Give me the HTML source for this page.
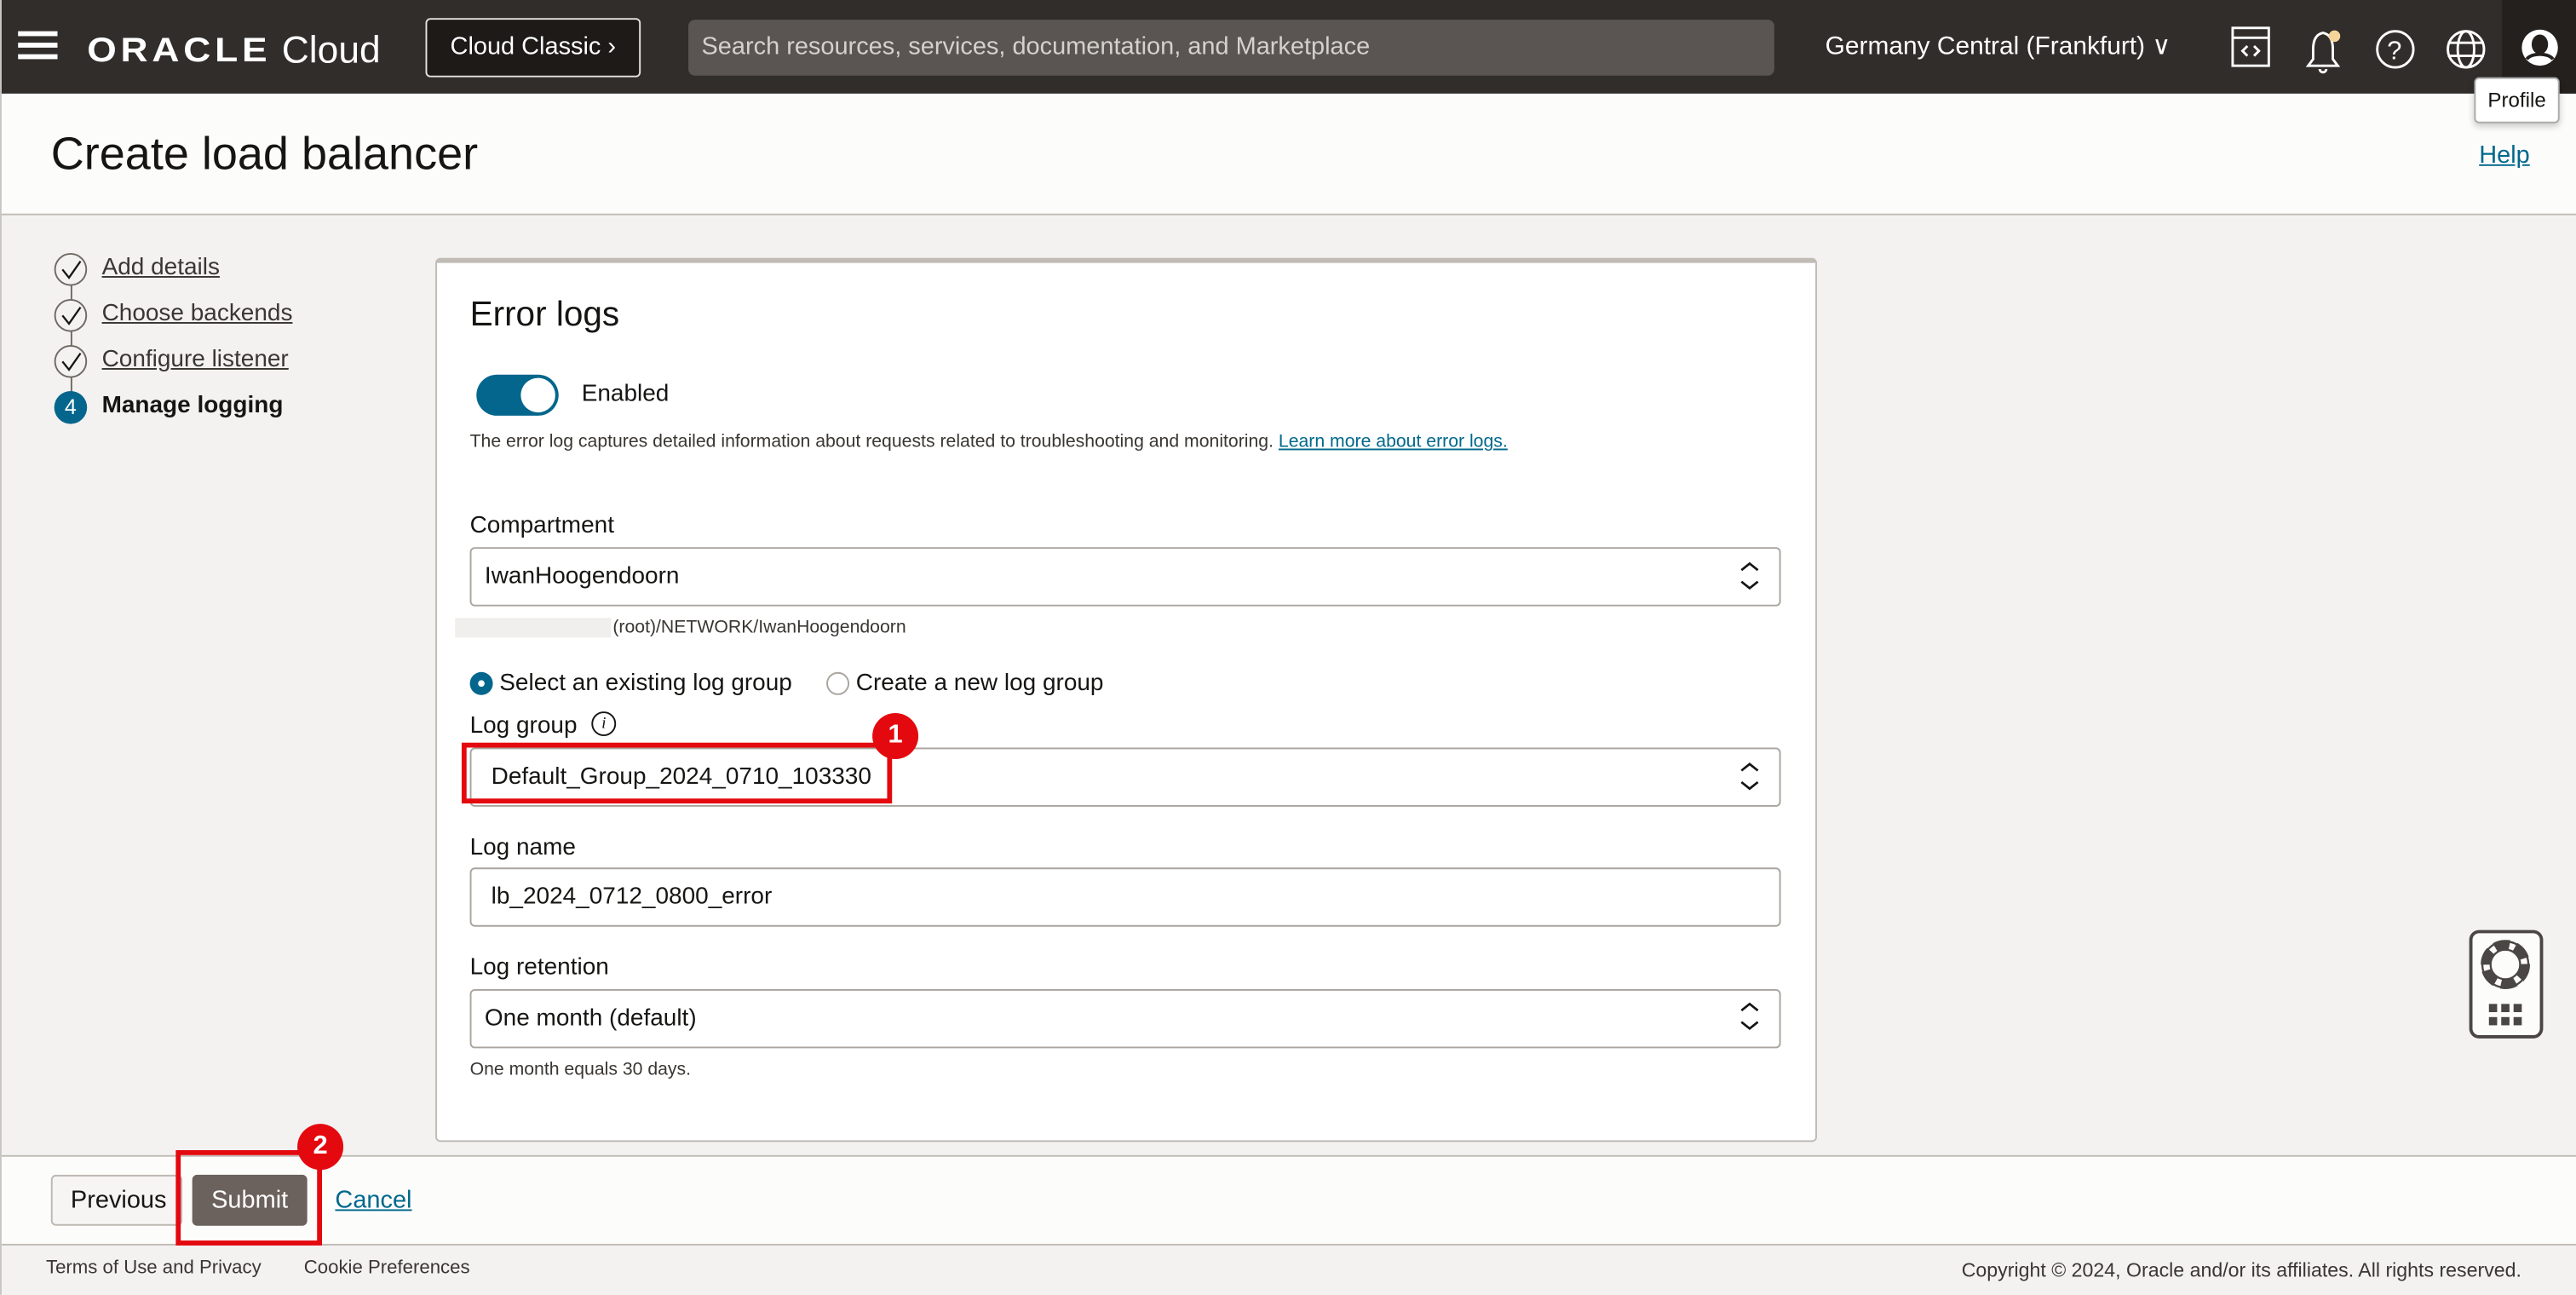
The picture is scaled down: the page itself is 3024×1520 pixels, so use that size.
<!DOCTYPE html>
<html><head><meta charset="utf-8"><style>
*{box-sizing:border-box;margin:0;padding:0}
html,body{width:3024px;height:1520px;overflow:hidden;background:#f3f2f1}
#w{width:1568px;height:788px;transform:scale(1.92857);transform-origin:0 0;position:relative;font-family:"Liberation Sans",sans-serif;color:#161513;background:#f3f2f1;border-left:1px solid #c9c5c0}
.a{position:absolute}
.hdr{left:0;top:0;width:1568px;height:57px;background:#312d2a}
.lnk{color:#00688c;text-decoration:underline}
.sel{position:absolute;left:285px;width:798px;height:36px;background:#fff;border:1px solid #aaa49e;border-radius:3px;font-size:14.5px;padding:0 0 0 8px;line-height:34px}
.lbl{position:absolute;left:285px;font-size:14.5px}
.step{position:absolute;left:32px;width:20px;height:20px;border-radius:50%;border:1px solid #6f6a64;background:#f3f2f1}
.stxt{position:absolute;left:61px;font-size:14.5px;color:#3a3632;text-decoration:underline}
</style></head><body><div id="w">
<div class="a hdr"></div>
<div class="a" style="left:10px;top:19px;width:24px;height:2.5px;background:#fff;box-shadow:0 7px 0 #fff,0 14px 0 #fff"></div>
<div class="a" style="left:52px;top:17px;color:#fff;font-size:23px;white-space:nowrap"><span style="font-weight:bold;letter-spacing:2.5px;transform:scaleY(0.9);display:inline-block">ORACLE</span> Cloud</div>
<div class="a" style="left:258px;top:11px;width:131px;height:36px;border:1px solid #e5e2de;border-radius:3px;background:#1d1a18;color:#fff;font-size:15px;line-height:34px;text-align:center">Cloud Classic ›</div>
<div class="a" style="left:418px;top:12px;width:661px;height:34px;background:#5a5552;border-radius:4px;color:#d5d1cc;font-size:15px;line-height:34px;padding-left:8px">Search resources, services, documentation, and Marketplace</div>
<div class="a" style="left:1110px;top:19px;color:#fff;font-size:15.5px">Germany Central (Frankfurt) ∨</div>
<svg class="a" style="left:1355px;top:14px" width="180" height="32" viewBox="0 0 180 32" fill="none" stroke="#fff" stroke-width="1.5">
<rect x="3" y="3" width="22" height="23"/><line x1="3" y1="9" x2="25" y2="9"/><path d="M12 14l-3 3 3 3M16 14l3 3-3 3"/>
<path d="M58 6c-5 1-6 6-6 10v6l-3 4h18l-3-4v-6c0-4-1-9-6-10zM56 28a2 2 0 0 0 4 0"/><circle cx="65" cy="8" r="3.5" fill="#f5d59a" stroke="none"/>
<circle cx="102" cy="16" r="11"/><text x="97" y="22" fill="#fff" stroke="none" font-size="16" font-family="Liberation Sans">?</text>
<circle cx="145" cy="16" r="11"/><ellipse cx="145" cy="16" rx="5" ry="11"/><line x1="134" y1="12" x2="156" y2="12"/><line x1="134" y1="20" x2="156" y2="20"/>
</svg>
<div class="a" style="left:1522px;top:0;width:46px;height:57px;background:#23201e"></div>
<svg class="a" style="left:1533px;top:17px" width="24" height="24" viewBox="0 0 24 24"><circle cx="12" cy="12" r="11" fill="#fff"/><ellipse cx="12" cy="10" rx="5" ry="6" fill="#23201e"/><path d="M4 19c3-4 13-4 16 0" fill="none" stroke="#23201e" stroke-width="2"/></svg>
<div class="a" style="left:0;top:57px;width:1568px;height:74px;background:#fcfcfb;border-bottom:1.5px solid #c0bbb5"></div>
<div class="a" style="left:1505px;top:47px;width:52px;height:28px;background:#fff;border:1px solid #aaa;border-radius:3px;font-size:12.5px;line-height:26px;text-align:center;box-shadow:0 2px 4px rgba(0,0,0,.2)">Profile</div>
<div class="a" style="left:30px;top:78px;font-size:28px">Create load balancer</div>
<div class="a lnk" style="left:1508px;top:86px;font-size:15px">Help</div>
<div class="a" style="left:42px;top:170px;width:1px;height:70px;background:#6f6a64"></div>
<div class="step" style="top:154px"></div><div class="step" style="top:182px"></div><div class="step" style="top:210px"></div>
<svg class="a" style="left:32px;top:154px" width="20" height="80" fill="none" stroke="#161513" stroke-width="1.2"><path d="M5 10l4 5 7-10M5 38l4 5 7-10M5 66l4 5 7-10"/></svg>
<div class="a" style="left:32px;top:238px;width:20px;height:20px;border-radius:50%;background:#04668c;color:#fff;font-size:13px;line-height:20px;text-align:center">4</div>
<div class="stxt" style="top:155px">Add details</div><div class="stxt" style="top:183px">Choose backends</div><div class="stxt" style="top:211px">Configure listener</div>
<div class="a" style="left:61px;top:239px;font-size:14.5px;font-weight:bold">Manage logging</div>
<div class="a" style="left:264px;top:157px;width:841px;height:538px;background:#fff;border:1px solid #c0bbb5;border-top:3px solid #c0bbb5;border-radius:3px"></div>
<div class="a" style="left:285px;top:180px;font-size:21px">Error logs</div>
<div class="a" style="left:289px;top:228px;width:50px;height:25px;border-radius:13px;background:#04668c"></div>
<div class="a" style="left:316px;top:230px;width:21px;height:21px;border-radius:50%;background:#fff"></div>
<div class="a" style="left:353px;top:232px;font-size:14.5px">Enabled</div>
<div class="a" style="left:285px;top:263px;font-size:11px;color:#3a3632">The error log captures detailed information about requests related to troubleshooting and monitoring. <span class="lnk">Learn more about error logs.</span></div>
<div class="lbl" style="top:312px">Compartment</div>
<div class="sel" style="top:333px">IwanHoogendoorn</div>
<div class="a" style="left:276px;top:376px;width:95px;height:12px;background:#f0efed"></div>
<div class="a" style="left:372px;top:376px;font-size:11px;color:#3a3632">(root)/NETWORK/IwanHoogendoorn</div>
<div class="a" style="left:285px;top:409px;width:14px;height:14px;border-radius:50%;background:#04668c"></div>
<div class="a" style="left:290px;top:414px;width:4px;height:4px;border-radius:50%;background:#fff"></div>
<div class="a" style="left:303px;top:408px;font-size:14.5px">Select an existing log group</div>
<div class="a" style="left:502px;top:409px;width:14px;height:14px;border-radius:50%;border:1px solid #aaa49e;background:#fff"></div>
<div class="a" style="left:520px;top:408px;font-size:14.5px">Create a new log group</div>
<div class="lbl" style="top:434px">Log group</div>
<div class="a" style="left:359px;top:433px;width:15px;height:15px;border-radius:50%;border:1px solid #161513;font-size:10px;font-style:italic;text-align:center;line-height:13px;font-family:'Liberation Serif',serif">i</div>
<div class="sel" style="top:455px;padding-left:12px">Default_Group_2024_0710_103330</div>
<div class="lbl" style="top:508px">Log name</div>
<div class="sel" style="top:528px;padding-left:12px">lb_2024_0712_0800_error</div>
<div class="lbl" style="top:581px">Log retention</div>
<div class="sel" style="top:602px">One month (default)</div>
<div class="a" style="left:285px;top:645px;font-size:11px;color:#3a3632">One month equals 30 days.</div>
<svg class="a" style="left:1057px;top:341px" width="14" height="300" fill="none" stroke="#161513" stroke-width="1.4"><path d="M2 6l5-4 5 4M2 13l5 4 5-4M2 128l5-4 5 4M2 135l5 4 5-4M2 274l5-4 5 4M2 281l5 4 5-4"/></svg>
<div class="a" style="left:280px;top:452px;width:262px;height:37px;border:3px solid #e3090f"></div>
<div class="a" style="left:530px;top:434px;width:28px;height:28px;border-radius:50%;background:#e3090f;color:#fff;font-weight:bold;font-size:16px;text-align:center;line-height:28px">1</div>
<div class="a" style="left:1502px;top:566px;width:45px;height:66px;border:2.5px solid #4a4643;border-radius:6px;background:#fcfcfb"></div>
<svg class="a" style="left:1509px;top:572px" width="30" height="56"><circle cx="15" cy="15" r="12" fill="none" stroke="#4a4643" stroke-width="6" stroke-dasharray="9 3.5"/><circle cx="15" cy="15" r="14" fill="none" stroke="#4a4643" stroke-width="1.2"/><circle cx="15" cy="15" r="9" fill="none" stroke="#4a4643" stroke-width="1.2"/><g fill="#4a4643"><rect x="5" y="39" width="5" height="5"/><rect x="12.5" y="39" width="5" height="5"/><rect x="20" y="39" width="5" height="5"/><rect x="5" y="47" width="5" height="5"/><rect x="12.5" y="47" width="5" height="5"/><rect x="20" y="47" width="5" height="5"/></g></svg>
<div class="a" style="left:0;top:703px;width:1568px;height:55px;background:#fcfcfb;border-top:1.5px solid #c0bbb5;border-bottom:1.5px solid #c0bbb5"></div>
<div class="a" style="left:30px;top:715px;width:80px;height:31px;border:1px solid #bdb8b2;border-radius:3px;background:#f6f5f4;font-size:15px;line-height:29px;padding-left:11px">Previous</div>
<div class="a" style="left:116px;top:715px;width:70px;height:31px;border-radius:3px;background:#6b615d;color:#fff;font-size:15px;line-height:31px;text-align:center">Submit</div>
<div class="a lnk" style="left:203px;top:722px;font-size:15px">Cancel</div>
<div class="a" style="left:106px;top:700px;width:89px;height:58px;border:3px solid #e3090f"></div>
<div class="a" style="left:180px;top:684px;width:28px;height:28px;border-radius:50%;background:#e3090f;color:#fff;font-weight:bold;font-size:16px;text-align:center;line-height:28px">2</div>
<div class="a" style="left:27px;top:766px;font-size:11.5px;color:#3a3632">Terms of Use and Privacy</div>
<div class="a" style="left:184px;top:766px;font-size:11.5px;color:#3a3632">Cookie Preferences</div>
<div class="a" style="left:1193px;top:766px;font-size:12px;color:#3a3632">Copyright © 2024, Oracle and/or its affiliates. All rights reserved.</div>
</div></body></html>
